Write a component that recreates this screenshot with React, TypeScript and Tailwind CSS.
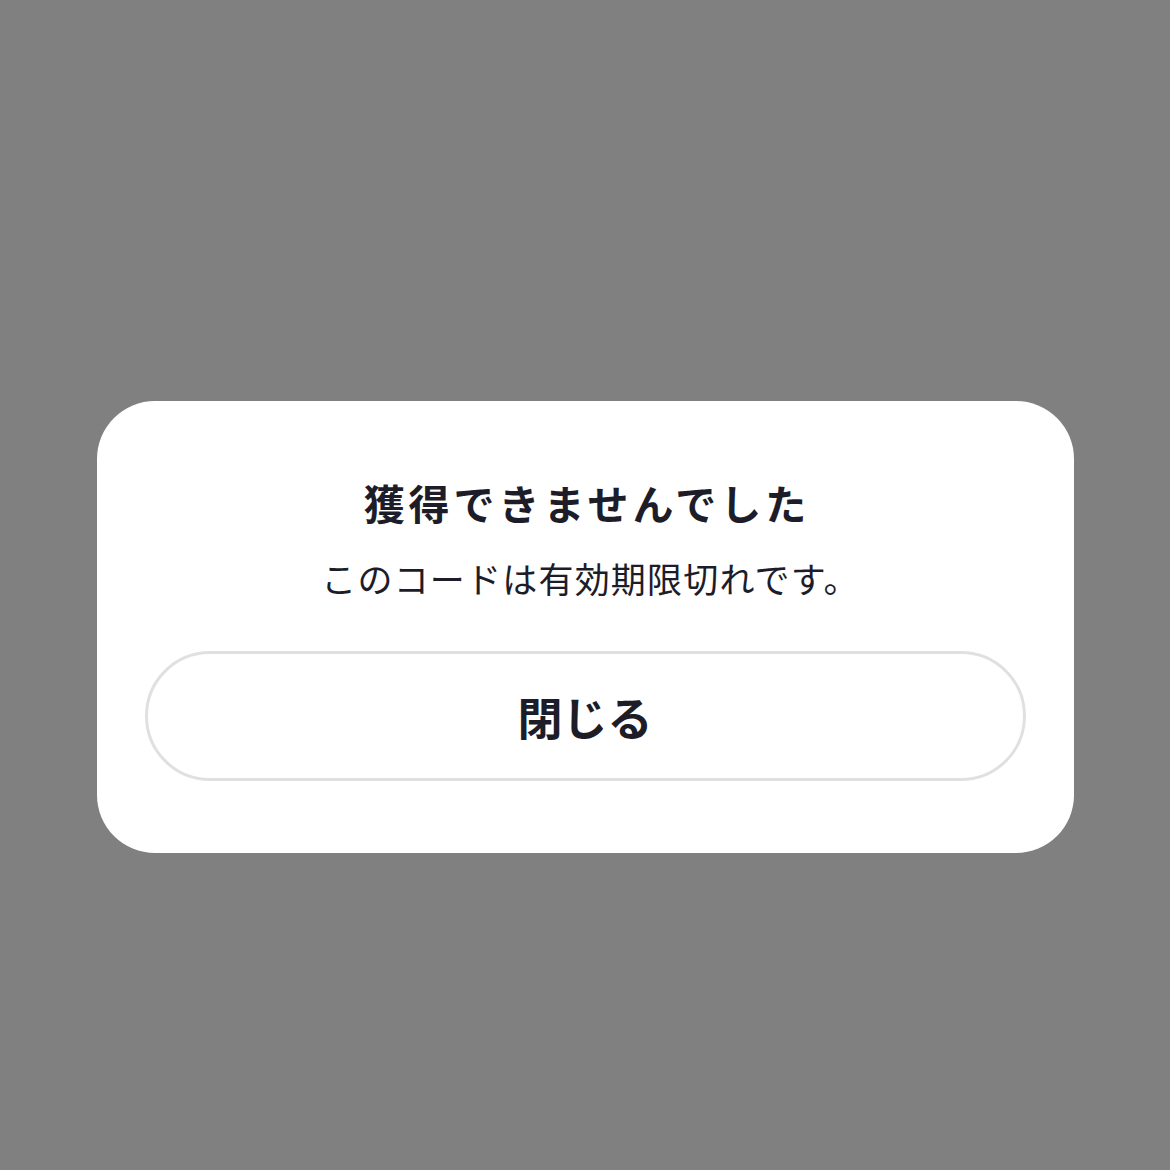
export default function App() {
  return (
    <div
      className="min-h-[1170px] w-full bg-[#808080] flex flex-col items-center pt-[401px]"
      style={{ fontFamily: '"Noto Sans CJK JP", "Noto Sans", sans-serif' }}
    >
      {/* Dialog */}
      <div className="w-[977px] bg-white rounded-[58px] flex flex-col items-center px-12 pt-[77px] pb-[72px]">
        <h2 className="pl-[4px] text-[41px] leading-[48px] tracking-[4px] font-bold text-[#1d1d29]">獲得できませんでした</h2>
        <p className="mt-[30px] pl-[11px] text-[35px] leading-[44px] tracking-[1.2px] text-[#1d1d29]">このコードは有効期限切れです。</p>
        <button className="mt-[51px] w-full h-[130px] rounded-full border-[3px] border-[#e0e0e0] bg-white flex items-center justify-center">
          <span className="text-[45px] leading-none font-bold text-[#1d1d29]">閉じる</span>
        </button>
      </div>
    </div>
  );
}
